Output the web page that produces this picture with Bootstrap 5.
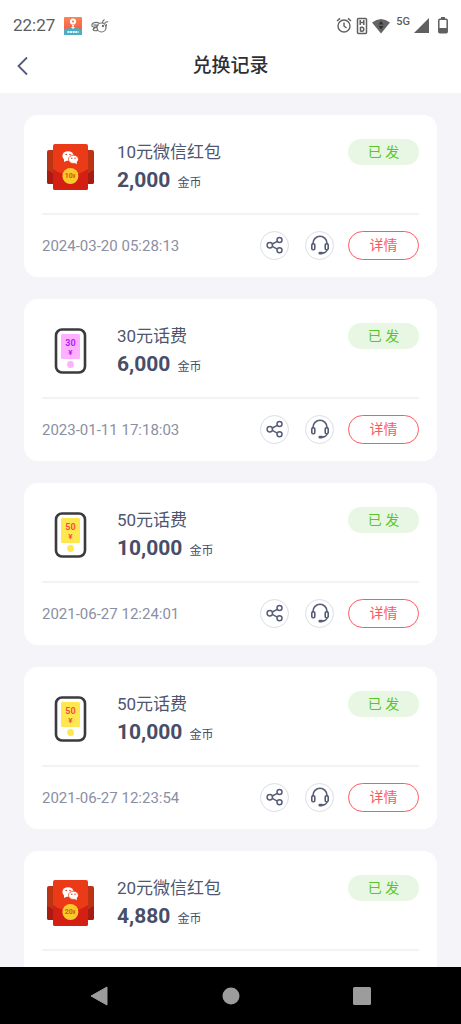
<!DOCTYPE html>
<html lang="zh-CN">
<head>
<meta charset="utf-8">
<meta name="viewport" content="width=device-width, initial-scale=1">
<title>兑换记录</title>
<link rel="stylesheet" href="https://cdn.jsdelivr.net/npm/bootstrap@5.3.0/dist/css/bootstrap.min.css">
<style>
  body { font-family: Roboto, "Noto Sans CJK SC", sans-serif; background: #f4f4f9; color: #4f566f; }
  .status-bar { height: 48px; padding: 3px 13px 0 13px; font-size: 17px; color: #5c5c5c; }
  .status-bar .signal-label { font-size: 11px; font-weight: 500; line-height: 12px; margin: 0 4px 8px 6px; }
  .battery { margin-left: 9px; }
  .title-bar { height: 45px; padding: 0 16px 10px; }
  .title-bar h1 { font-size: 19px; line-height: 28px; font-weight: 500; color: #2f2f33; }
  .back-link { width: 14px; }
  .records { min-height: 0; overflow-y: auto; scrollbar-width: none; padding: 22px 24px; gap: 22px; }
  .records::-webkit-scrollbar { display: none; }
  .record { flex: none; border-radius: 14px; padding: 0 18px; }
  .record-top { padding-top: 24px; height: 100px; border-bottom: 2px solid #f2f2f7; }
  .record-bottom { height: 62px; padding-bottom: 2px; }
  .record-text { padding-left: 19px; }
  .record-name { font-size: 17px; line-height: 26px; }
  .record-amount { font-size: 21px; line-height: 30px; font-weight: 700; color: #474e68; }
  .record-unit { font-size: 12px; font-weight: 400; margin-left: 7px; }
  .record-date { font-size: 15px; padding-top: 2px; color: #8b8fa3; }
  .state-tag { width: 71px; height: 26px; background: #e8f7e3; color: #5cc52c; font-size: 14px; }
  .btn-round { width: 29px; height: 29px; border: 1px solid #dcdde6; background: #fff; }
  .btn-detail { width: 71px; height: 29px; border: 1px solid #fb5a62; color: #fb5a62; font-size: 14px; line-height: 20px; margin-left: 14px; }
  .btn-detail:hover { background: #fb5a62; color: #fff; }
  .nav-keys { height: 57px; background: #000; padding: 0 33px; }
  .nav-keys button { background: none; }
</style>
</head>
<body class="d-flex flex-column vh-100 overflow-hidden">

<svg class="d-none" aria-hidden="true">
  <symbol id="share" viewBox="0 0 18 18"><g fill="none" stroke="#565d78" stroke-width="1.5"><circle cx="3.8" cy="9.2" r="2.7"/><circle cx="13.5" cy="4" r="2.5"/><circle cx="13.5" cy="14.2" r="2.5"/><path d="M6.3 8 11.3 5.3M6.3 10.4l5 2.7"/></g></symbol>
  <symbol id="headset" viewBox="0 0 20 20"><g fill="none" stroke="#565d78" stroke-width="1.6"><path d="M3 9.500V8.300a7 7 0 0 1 14 0v1.200M17 14.500c0 2-2.500 3.500-5 3.600"/><rect x="1.800" y="8.700" width="3" height="6" rx="1.200"/><rect x="15.200" y="8.700" width="3" height="6" rx="1.200"/></g><rect x="8.500" y="16.700" width="4.400" height="2.800" rx="1.300" fill="#565d78"/></symbol>
  <symbol id="packet" viewBox="0 0 56 56">
    <rect x="5" y="11" width="47" height="34" rx="2" fill="#bd3415"/><path d="M5 31l7 4h33l7-4v12a2 2 0 0 1-2 2H7a2 2 0 0 1-2-2z" fill="#a91a10"/>
    <rect x="11" y="5" width="35" height="46" rx="2" fill="#ea3a17"/><path d="M11 30Q28 42 46 30V49a2 2 0 0 1-2 2H13a2 2 0 0 1-2-2z" fill="#d41f13"/>
    <g fill="#fff"><ellipse cx="26" cy="17" rx="5.6" ry="4.8"/><path d="M22 19l0 4 4-2z"/><ellipse cx="31.4" cy="20.3" rx="5" ry="4.1" stroke="#ea3a17" stroke-width=".7"/><path d="M32 23.5l3 1.7-.6-3z"/></g>
    <g fill="#ea3a17"><circle cx="24.2" cy="15.5" r=".8"/><circle cx="28" cy="15.5" r=".8"/><circle cx="29.8" cy="19.2" r=".7"/><circle cx="33" cy="19.2" r=".7"/></g>
    <circle cx="28.4" cy="37" r="8" fill="#fbc92b"/>
  </symbol>
</svg>

<div class="status-bar bg-white flex-shrink-0 d-flex align-items-center">
  <span>22:27</span>
  <svg class="ms-2" width="20" height="20" viewBox="0 0 20 20"><defs><linearGradient id="app" x2="0" y2="1"><stop stop-color="#fb8550"/><stop offset="1" stop-color="#f64c48"/></linearGradient></defs><rect x="1" y="1" width="18" height="18" rx="1" fill="url(#app)"/><path d="M1 13q9-2 18 0v6H1z" fill="#4bafc4"/><circle cx="10" cy="5.5" r="3.1" fill="#fff"/><circle cx="10" cy="5.5" r="1" fill="#f76849"/><path d="M9 9h2v1.6H9zM8 11h4l-2 2z" fill="#fff"/><path d="M4.500 16h11" stroke="#e8fbff" stroke-width="2.2" stroke-dasharray="2 .6"/></svg>
  <svg class="ms-2" width="18" height="16" viewBox="0 0 18 16" fill="none" stroke="#707070" stroke-width="1.2"><circle cx="10.500" cy="9.500" r="4.500"/><path d="M8 5C5 3.500 .8 4.800 .8 7.300c0 2 2.500 2.200 5.200 1.200M6.200 9.500c-3 .300-4.500 1.500-4 2.500s3.500 1 5 0M11.500 5c0-1.500.5-2.600 2-3.600M13.500 5.800c.5-1.500 1.500-2.300 3.700-2M14.800 8.500c.8-.8.900-1.600.6-2.300M2.500 6.800l5 .5M3 9.500l-.5 2"/><circle cx="12" cy="8" r="1.200" fill="#707070" stroke="none"/></svg>

  <svg class="ms-auto" width="16" height="17" viewBox="0 0 16 17" fill="none" stroke="#606060" stroke-width="1.400"><circle cx="8" cy="9" r="6"/><path d="M8 5.500V9l2.500 2M1 4l3-2.600M15 4l-3-2.600"/></svg>
  <svg class="ms-1" width="12" height="18" viewBox="0 0 12 18" fill="none" stroke="#606060" stroke-width="1.500"><rect x="1.500" y="1.500" width="9" height="15" rx="1"/><path d="M4.200 3v5M7.800 3v5M4.200 5.500h3.600M4.500 10v4.500M4.500 10.300h1.300q2 0 2 2t-2 2H4.500"/></svg>
  <svg class="ms-1" width="18" height="16" viewBox="0 0 18 16"><path d="M0 4.500Q9-2.500 18 4.500L9 15.500z" fill="#646464"/><path d="M9 3l2.500 3.500h-5zM6.500 8h5L9 11.500z" fill="#303030"/></svg>
  <span class="signal-label">5G</span>
  <svg width="15" height="16" viewBox="0 0 15 16"><path d="M15 0v15H0z" fill="#606060"/></svg>
  <svg class="battery" width="10" height="17" viewBox="0 0 10 17"><path d="M3 0h4v2H3z" fill="#606060"/><rect x=".8" y="2.300" width="8.400" height="13.400" rx="1" fill="none" stroke="#606060" stroke-width="1.500"/><path d="M1 11h8v5H1z" fill="#606060"/></svg>
</div>

<header class="title-bar bg-white flex-shrink-0 d-flex align-items-center">
  <a href="#" class="back-link d-flex" aria-label="返回"><svg width="14" height="20" viewBox="0 0 14 20" fill="none" stroke="#535b7c" stroke-width="1.800"><path d="M11 1.500 2.500 10 11 18.500"/></svg></a>
  <h1 class="flex-fill text-center m-0">兑换记录</h1>
  <span class="back-link"></span>
</header>

<main id="records" class="records flex-fill d-flex flex-column"></main>

<nav class="nav-keys flex-shrink-0 d-flex justify-content-between align-items-center">
  <button type="button" class="border-0 p-0 d-flex justify-content-center flex-fill" aria-label="返回键"><svg width="18" height="20" viewBox="0 0 18 20"><path d="M17 1v18L1 10z" fill="#9c9c9c" stroke="#9c9c9c" stroke-linejoin="round"/></svg></button>
  <button type="button" class="border-0 p-0 d-flex justify-content-center flex-fill" aria-label="主页键"><svg width="18" height="18"><circle cx="9" cy="9" r="8.500" fill="#9c9c9c"/></svg></button>
  <button type="button" class="border-0 p-0 d-flex justify-content-center flex-fill" aria-label="任务键"><svg width="18" height="18"><rect width="18" height="18" rx="1.500" fill="#9c9c9c"/></svg></button>
</nav>

<script src="https://cdn.jsdelivr.net/npm/bootstrap@5.3.0/dist/js/bootstrap.bundle.min.js"></script>
<script>
  const records = [
    { kind: 'packet', value: 10, name: '10元微信红包', amount: '2,000', date: '2024-03-20 05:28:13' },
    { kind: 'phone', value: 30, name: '30元话费', amount: '6,000', date: '2023-01-11 17:18:03', screen: '#ffb0ff', ink: '#b41ff0' },
    { kind: 'phone', value: 50, name: '50元话费', amount: '10,000', date: '2021-06-27 12:24:01', screen: '#ffe84f', ink: '#f4513c' },
    { kind: 'phone', value: 50, name: '50元话费', amount: '10,000', date: '2021-06-27 12:23:54', screen: '#ffe84f', ink: '#f4513c' },
    { kind: 'packet', value: 20, name: '20元微信红包', amount: '4,880' }
  ];
  const art = r => r.kind === 'packet'
    ? `<use href="#packet"/><text x="28" y="39" font-size="7" font-weight="700" text-anchor="middle" fill="#cf5a12">${r.value}<tspan font-size="5">¥</tspan></text>`
    : `<rect x="14" y="6.500" width="29" height="43" rx="6" fill="#fff" stroke="#3b3b3e" stroke-width="2.600"/><rect x="19" y="11" width="19" height="25" rx="1.500" fill="${r.screen}"/><circle cx="28.500" cy="41.500" r="3.400" fill="${r.screen}"/><g fill="${r.ink}" font-weight="700" text-anchor="middle"><text x="28.500" y="23" font-size="9">${r.value}</text><text x="28.500" y="32" font-size="8">¥</text></g>`;
  const actions = r => !r.date ? '' : `
        <time class="record-date me-auto">${r.date}</time>
        <button type="button" class="btn-round rounded-circle p-0 d-flex align-items-center justify-content-center me-3" aria-label="分享"><svg width="18" height="18"><use href="#share"/></svg></button>
        <button type="button" class="btn-round rounded-circle p-0 d-flex align-items-center justify-content-center" aria-label="客服"><svg width="20" height="20"><use href="#headset"/></svg></button>
        <button type="button" class="btn btn-detail rounded-pill p-0">详情</button>`;
  document.getElementById('records').innerHTML = records.map(r => `
    <article class="record bg-white">
      <div class="record-top d-flex align-items-start">
        <svg class="flex-shrink-0" width="56" height="56" viewBox="0 0 56 56" aria-hidden="true">${art(r)}</svg>
        <div class="record-text flex-fill">
          <div class="record-name">${r.name}</div>
          <div class="record-amount">${r.amount}<span class="record-unit">金币</span></div>
        </div>
        <span class="state-tag rounded-pill d-flex align-items-center justify-content-center">已 发</span>
      </div>
      <div class="record-bottom d-flex align-items-center">${actions(r)}</div>
    </article>`).join('');
</script>
</body>
</html>
